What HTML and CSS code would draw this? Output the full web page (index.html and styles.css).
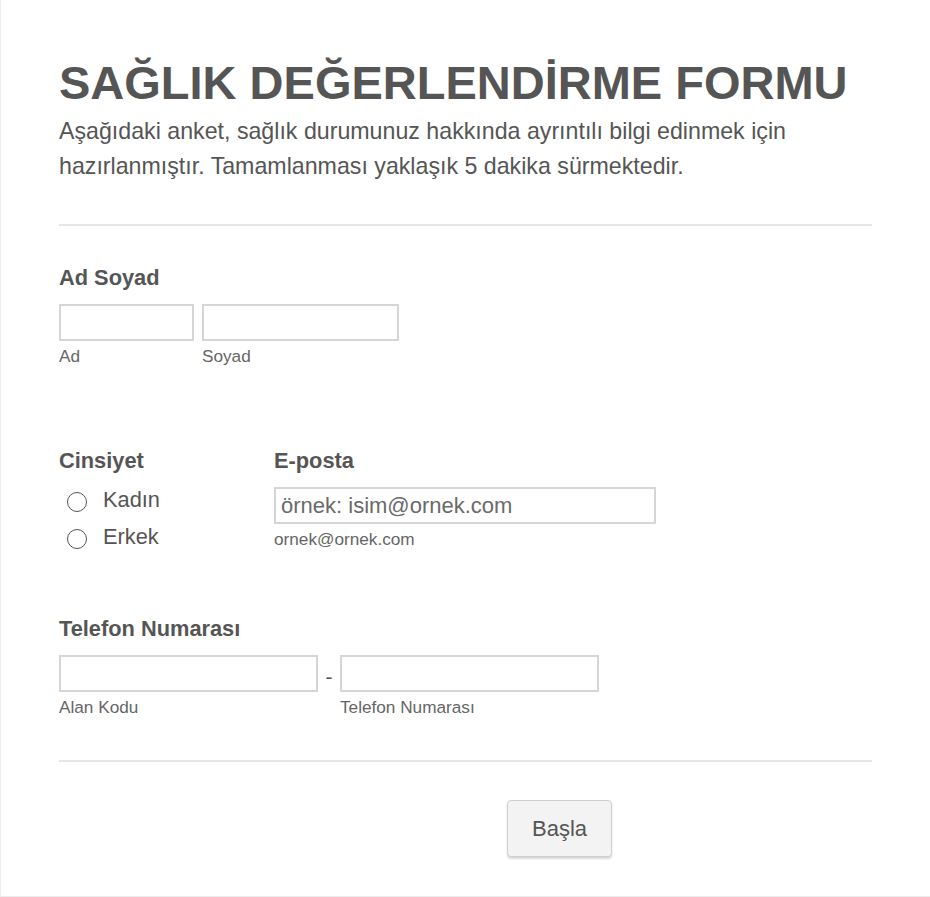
FILE: index.html
```html
<!DOCTYPE html>
<html lang="tr">
<head>
    <meta charset="UTF-8">
    <meta name="viewport" content="width=device-width, initial-scale=1.0">
    <title>Sağlık Değerlendirme Formu</title>
    <link rel="stylesheet" href="styles.css">
</head>
<body>
    <form class="form-card">
        <header class="form-header">
            <h1>SAĞLIK DEĞERLENDİRME FORMU</h1>
            <p class="intro">Aşağıdaki anket, sağlık durumunuz hakkında ayrıntılı bilgi edinmek için hazırlanmıştır. Tamamlanması yaklaşık 5 dakika sürmektedir.</p>
        </header>

        <section class="field name-field">
            <label class="field-label">Ad Soyad</label>
            <div class="input-row">
                <div class="sub">
                    <input type="text" class="input w-first">
                    <span class="sub-label">Ad</span>
                </div>
                <div class="sub">
                    <input type="text" class="input w-last">
                    <span class="sub-label">Soyad</span>
                </div>
            </div>
        </section>

        <div class="split-row">
            <section class="field gender-field">
                <label class="field-label">Cinsiyet</label>
                <div class="radio-list">
                    <label class="radio"><span class="dot"></span>Kadın</label>
                    <label class="radio"><span class="dot"></span>Erkek</label>
                </div>
            </section>
            <section class="field email-field">
                <label class="field-label">E-posta</label>
                <div class="sub">
                    <input type="text" class="input w-email" placeholder="örnek: isim@ornek.com">
                    <span class="sub-label">ornek@ornek.com</span>
                </div>
            </section>
        </div>

        <section class="field phone-field">
            <label class="field-label">Telefon Numarası</label>
            <div class="input-row">
                <div class="sub">
                    <input type="text" class="input w-phone">
                    <span class="sub-label">Alan Kodu</span>
                </div>
                <span class="dash">-</span>
                <div class="sub">
                    <input type="text" class="input w-phone">
                    <span class="sub-label">Telefon Numarası</span>
                </div>
            </div>
        </section>

        <div class="actions">
            <button type="button" class="btn">Başla</button>
        </div>
    </form>
</body>
</html>
```

FILE: styles.css
```css
* {
    margin: 0;
    padding: 0;
    box-sizing: border-box;
}

body {
    font-family: 'Liberation Sans', Arial, sans-serif;
    background: #fff;
    color: #555;
    overflow: hidden;
}

.form-card {
    width: 960px;
    height: 897px;
    border: 1px solid #ececec;
    border-top: none;
    padding: 0 58px;
    display: flex;
    flex-direction: column;
}

.form-header {
    width: 813px;
    padding-top: 57px;
    padding-bottom: 40px;
    border-bottom: 2px solid #e6e6e6;
}

h1 {
    font-size: 47px;
    font-weight: bold;
    color: #555;
    line-height: 52px;
}

.intro {
    font-size: 23.2px;
    line-height: 35px;
    color: #555;
    margin-top: 5px;
}

.field-label {
    display: block;
    font-size: 21.8px;
    font-weight: bold;
    color: #555;
    line-height: 24px;
}

.name-field {
    margin-top: 40px;
}

.input-row {
    display: flex;
    align-items: flex-start;
    gap: 8px;
    margin-top: 14px;
}

.sub {
    display: flex;
    flex-direction: column;
}

.input {
    height: 37px;
    border: 2px solid #d6d6d6;
    background: #fff;
    font-family: inherit;
    font-size: 22px;
    color: #555;
    padding: 0 5px;
    outline: none;
}

.input::placeholder {
    color: #6a6a6a;
}

.w-first { width: 135px; }
.w-last { width: 197px; }
.w-email { width: 382px; }
.w-phone { width: 259px; }

.sub-label {
    font-size: 17.2px;
    color: #666;
    margin-top: 5px;
    line-height: 20px;
}

.split-row {
    display: flex;
    margin-top: 83px;
}

.gender-field {
    width: 215px;
}

.radio-list {
    display: flex;
    flex-direction: column;
    gap: 10px;
    margin-top: 13px;
    padding-left: 8px;
}

.radio {
    display: flex;
    align-items: center;
    font-size: 21.8px;
    color: #555;
    line-height: 27px;
}

.dot {
    width: 20px;
    height: 20px;
    border: 1.5px solid #555;
    border-radius: 50%;
    margin-right: 16px;
    margin-top: 5px;
}

.email-field .sub {
    margin-top: 14px;
}

.phone-field {
    margin-top: 67px;
    width: 813px;
    padding-bottom: 43px;
    border-bottom: 2px solid #e6e6e6;
}

.phone-field .input-row {
    gap: 0;
}

.dash {
    width: 22px;
    text-align: center;
    font-size: 21px;
    line-height: 44px;
    color: #555;
}

.actions {
    width: 813px;
    display: flex;
    padding-left: 448px;
    padding-top: 38px;
}

.btn {
    width: 105px;
    height: 57px;
    font-family: inherit;
    font-size: 22px;
    color: #555;
    background: #f3f3f3;
    border: 1px solid #cfcfcf;
    border-radius: 4px;
    box-shadow: 0 2px 2px rgba(0, 0, 0, 0.15);
    cursor: pointer;
}
```
